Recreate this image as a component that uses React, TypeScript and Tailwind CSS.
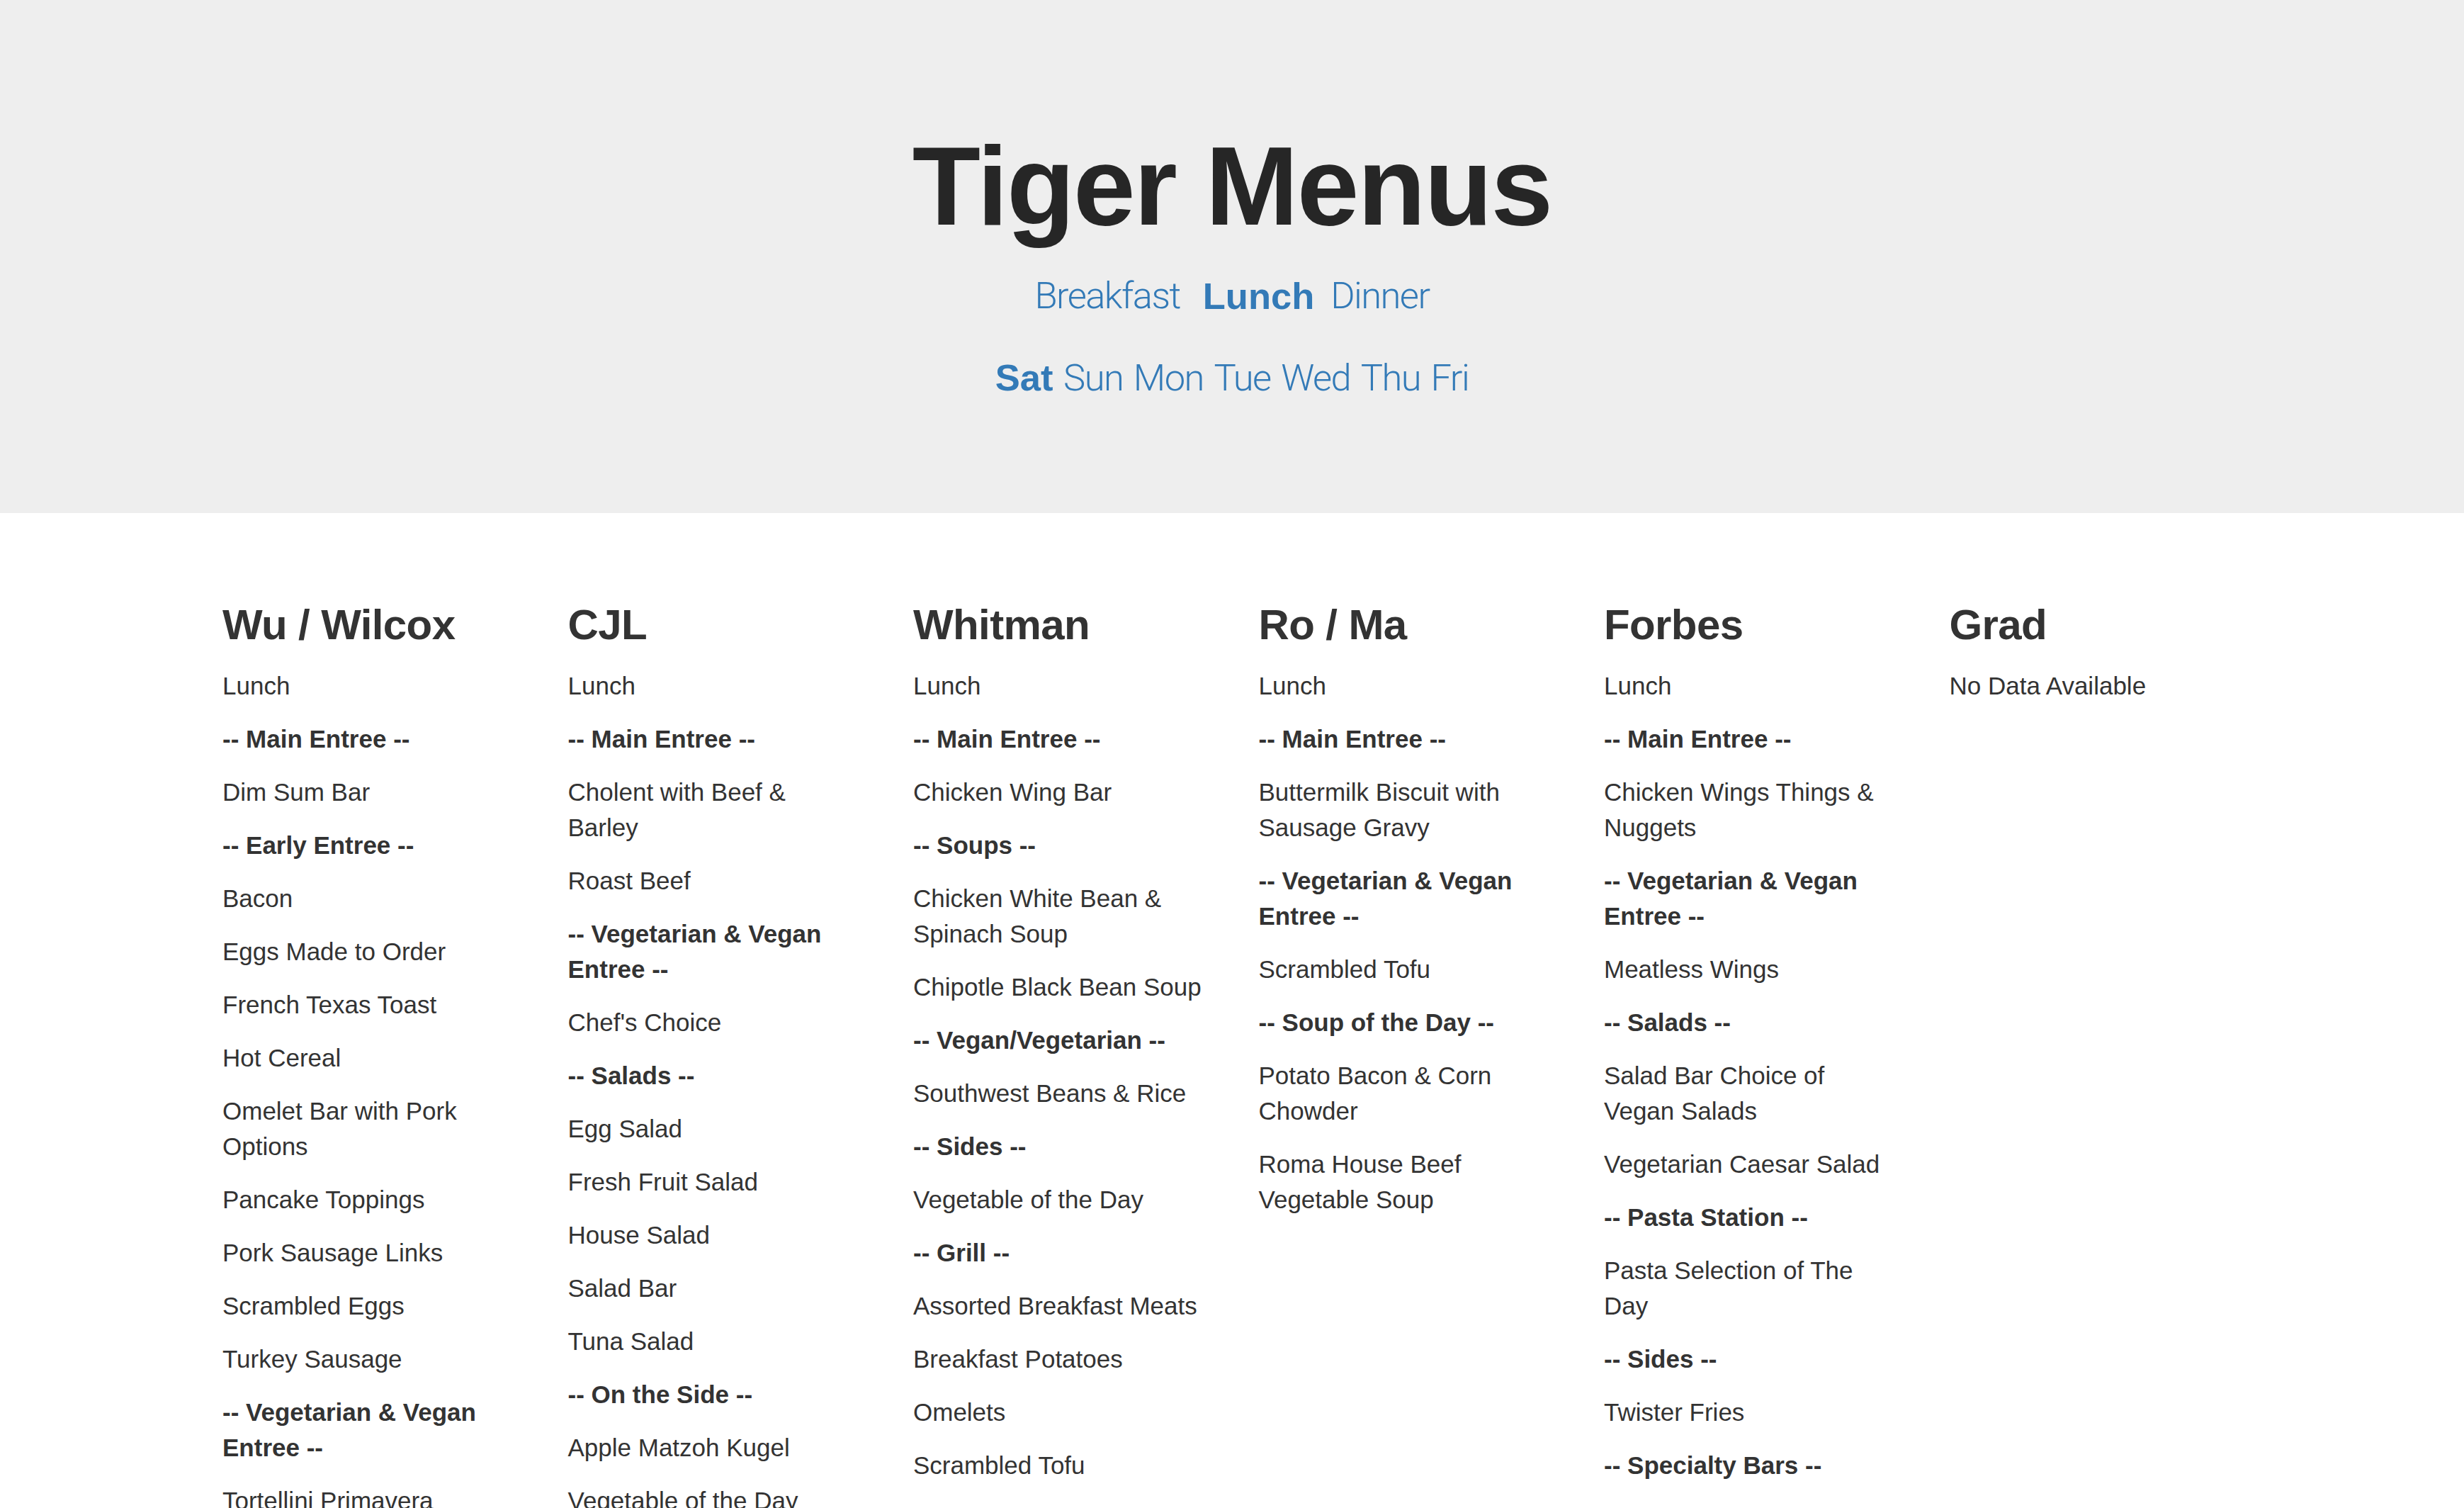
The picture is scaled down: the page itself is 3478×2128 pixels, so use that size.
import React from "react";

type THall = {
  name: string;
  meal?: string;
  items: string[];
};

const MEALS = [
  { label: "Breakfast", active: false },
  { label: "Lunch", active: true },
  { label: "Dinner", active: false },
];

const DAYS = ["Sat", "Sun", "Mon", "Tue", "Wed", "Thu", "Fri"];

const HALLS: THall[] = [
  {
    name: "Wu / Wilcox",
    meal: "Lunch",
    items: [
      "-- Main Entree --",
      "Dim Sum Bar",
      "-- Early Entree --",
      "Bacon",
      "Eggs Made to Order",
      "French Texas Toast",
      "Hot Cereal",
      "Omelet Bar with Pork Options",
      "Pancake Toppings",
      "Pork Sausage Links",
      "Scrambled Eggs",
      "Turkey Sausage",
      "-- Vegetarian & Vegan Entree --",
      "Tortellini Primavera",
    ],
  },
  {
    name: "CJL",
    meal: "Lunch",
    items: [
      "-- Main Entree --",
      "Cholent with Beef & Barley",
      "Roast Beef",
      "-- Vegetarian & Vegan Entree --",
      "Chef's Choice",
      "-- Salads --",
      "Egg Salad",
      "Fresh Fruit Salad",
      "House Salad",
      "Salad Bar",
      "Tuna Salad",
      "-- On the Side --",
      "Apple Matzoh Kugel",
      "Vegetable of the Day",
    ],
  },
  {
    name: "Whitman",
    meal: "Lunch",
    items: [
      "-- Main Entree --",
      "Chicken Wing Bar",
      "-- Soups --",
      "Chicken White Bean & Spinach Soup",
      "Chipotle Black Bean Soup",
      "-- Vegan/Vegetarian --",
      "Southwest Beans & Rice",
      "-- Sides --",
      "Vegetable of the Day",
      "-- Grill --",
      "Assorted Breakfast Meats",
      "Breakfast Potatoes",
      "Omelets",
      "Scrambled Tofu",
    ],
  },
  {
    name: "Ro / Ma",
    meal: "Lunch",
    items: [
      "-- Main Entree --",
      "Buttermilk Biscuit with Sausage Gravy",
      "-- Vegetarian & Vegan Entree --",
      "Scrambled Tofu",
      "-- Soup of the Day --",
      "Potato Bacon & Corn Chowder",
      "Roma House Beef Vegetable Soup",
    ],
  },
  {
    name: "Forbes",
    meal: "Lunch",
    items: [
      "-- Main Entree --",
      "Chicken Wings Things & Nuggets",
      "-- Vegetarian & Vegan Entree --",
      "Meatless Wings",
      "-- Salads --",
      "Salad Bar Choice of Vegan Salads",
      "Vegetarian Caesar Salad",
      "-- Pasta Station --",
      "Pasta Selection of The Day",
      "-- Sides --",
      "Twister Fries",
      "-- Specialty Bars --",
    ],
  },
  {
    name: "Grad",
    items: [],
  },
];

const MenuLine = ({ text }: { text: string }) => {
  const isSection = text.startsWith("--");
  return (
    <p className={"mb-[25px] text-[35px] leading-[50px] " + (isSection ? "font-bold" : "font-normal")}>
      {text}
    </p>
  );
};

const HallColumn = ({ hall }: { hall: THall }) => {
  const { name, meal, items } = hall;

  return (
    <div className="w-[487.5px] shrink-0 px-[37.5px]">
      <h3 className="mt-[50px] mb-[28px] text-[60px] leading-[66px] font-bold tracking-[-0.01em]">{name}</h3>
      {items.length === 0 ? (
        <MenuLine text="No Data Available" />
      ) : (
        <>
          <MenuLine text={meal ?? ""} />
          {items.map((item, i) => (
            <MenuLine key={i} text={item} />
          ))}
        </>
      )}
    </div>
  );
};

const App = () => {
  return (
    <div className="min-h-screen bg-white font-['Liberation_Sans',Arial,sans-serif] text-[#333]">
      <header className="h-[724px] bg-[#eee] pt-[176px] text-center">
        <h1 className="text-[157.5px] leading-[173px] font-bold tracking-[-0.013em] text-[#262626]">Tiger Menus</h1>

        <p className="mt-[31px] flex justify-center text-[52.5px] leading-[75px] text-[#337ab7]">
          <a href="#" className="mr-[32px] font-['Roboto',sans-serif] font-light tracking-[-0.03em]">
            {MEALS[0].label}
          </a>
          <a href="#" className="mr-[23px] font-bold">
            {MEALS[1].label}
          </a>
          <a href="#" className="font-['Roboto',sans-serif] font-light tracking-[-0.03em]">
            {MEALS[2].label}
          </a>
        </p>

        <p className="mt-[40px] text-[52.5px] leading-[75px] text-[#337ab7]">
          {DAYS.map((day, i) => (
            <React.Fragment key={day}>
              {i > 0 && " "}
              {i === 0 ? (
                <a href="#" className="font-bold">
                  {day}
                </a>
              ) : (
                <a href="#" className="font-['Roboto',sans-serif] font-light tracking-[-0.03em]">
                  {day}
                </a>
              )}
            </React.Fragment>
          ))}
        </p>
      </header>

      <main className="mx-auto mt-[75px] flex w-[2925px]">
        {HALLS.map((hall) => (
          <HallColumn key={hall.name} hall={hall} />
        ))}
      </main>
    </div>
  );
};

export default App;
